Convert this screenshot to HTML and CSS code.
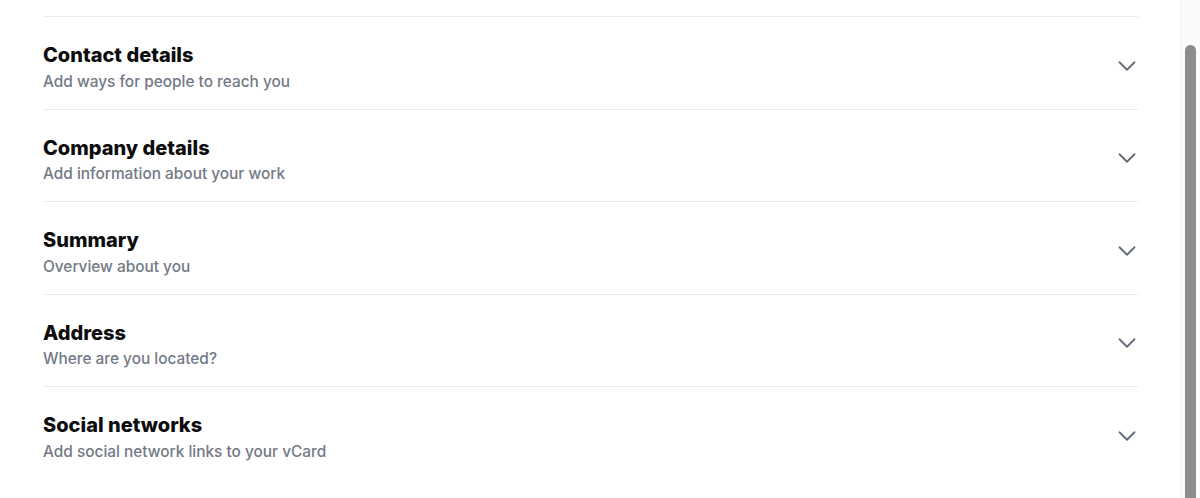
FILE: index.html
```html
<!DOCTYPE html>
<html lang="en">
<head>
    <meta charset="UTF-8">
    <meta name="viewport" content="width=device-width, initial-scale=1.0">
    <title>Edit vCard</title>
    <link rel="stylesheet" href="styles.css">
</head>
<body>
    <div class="page">
        <main class="content">
            <section class="accordion">
                <div class="accordion-item">
                    <div class="item-text">
                        <h3>Contact details</h3>
                        <p>Add ways for people to reach you</p>
                    </div>
                    <svg class="chevron" viewBox="0 0 24 24" fill="none" stroke="currentColor" stroke-width="1.8" stroke-linecap="round" stroke-linejoin="round"><path d="M19.5 8.25l-7.5 7.5-7.5-7.5"/></svg>
                </div>
                <div class="accordion-item">
                    <div class="item-text">
                        <h3>Company details</h3>
                        <p>Add information about your work</p>
                    </div>
                    <svg class="chevron" viewBox="0 0 24 24" fill="none" stroke="currentColor" stroke-width="1.8" stroke-linecap="round" stroke-linejoin="round"><path d="M19.5 8.25l-7.5 7.5-7.5-7.5"/></svg>
                </div>
                <div class="accordion-item">
                    <div class="item-text">
                        <h3>Summary</h3>
                        <p>Overview about you</p>
                    </div>
                    <svg class="chevron" viewBox="0 0 24 24" fill="none" stroke="currentColor" stroke-width="1.8" stroke-linecap="round" stroke-linejoin="round"><path d="M19.5 8.25l-7.5 7.5-7.5-7.5"/></svg>
                </div>
                <div class="accordion-item">
                    <div class="item-text">
                        <h3>Address</h3>
                        <p>Where are you located?</p>
                    </div>
                    <svg class="chevron" viewBox="0 0 24 24" fill="none" stroke="currentColor" stroke-width="1.8" stroke-linecap="round" stroke-linejoin="round"><path d="M19.5 8.25l-7.5 7.5-7.5-7.5"/></svg>
                </div>
                <div class="accordion-item">
                    <div class="item-text">
                        <h3>Social networks</h3>
                        <p>Add social network links to your vCard</p>
                    </div>
                    <svg class="chevron" viewBox="0 0 24 24" fill="none" stroke="currentColor" stroke-width="1.8" stroke-linecap="round" stroke-linejoin="round"><path d="M19.5 8.25l-7.5 7.5-7.5-7.5"/></svg>
                </div>
            </section>
        </main>

        <!-- fake page scrollbar, page is scrolled near the bottom -->
        <div class="scrollbar">
            <div class="scroll-thumb"></div>
        </div>
    </div>
</body>
</html>
```

FILE: styles.css
```css
:root {
    --text-dark: #0d0d0d;
    --text-muted: #737986;
    --divider: #ebebeb;
    --icon-color: #656a7a;
}

* {
    margin: 0;
    padding: 0;
    box-sizing: border-box;
}

body {
    background-color: white;
    font-family: 'Inter', 'Liberation Sans', sans-serif;
    color: var(--text-dark);
}

.page {
    display: flex;
    height: 498px;
    overflow: hidden;
}

.content {
    flex: 1;
    padding: 16px 42px 0 43px;
}

.accordion-item {
    display: flex;
    justify-content: space-between;
    align-items: center;
    border-top: 1px solid var(--divider);
    padding: 24px 0 15px;
}

.item-text h3 {
    font-size: 20px;
    line-height: 28px;
    font-weight: 800;
}

.item-text p {
    font-size: 15.4px;
    line-height: 24px;
    font-weight: 500;
    margin-top: 0.5px;
    color: var(--text-muted);
}

.chevron {
    width: 24px;
    height: 24px;
    color: var(--icon-color);
    margin: 0 -1px 3px 0;
}

.scrollbar {
    width: 20px;
    background-color: #fafafa;
    border-left: 1px solid #f0f0f0;
    padding: 45px 4px 0 4px;
}

.scroll-thumb {
    height: 100%;
    border-radius: 6px 6px 0 0;
    background-color: #8c8c8c;
}
```
